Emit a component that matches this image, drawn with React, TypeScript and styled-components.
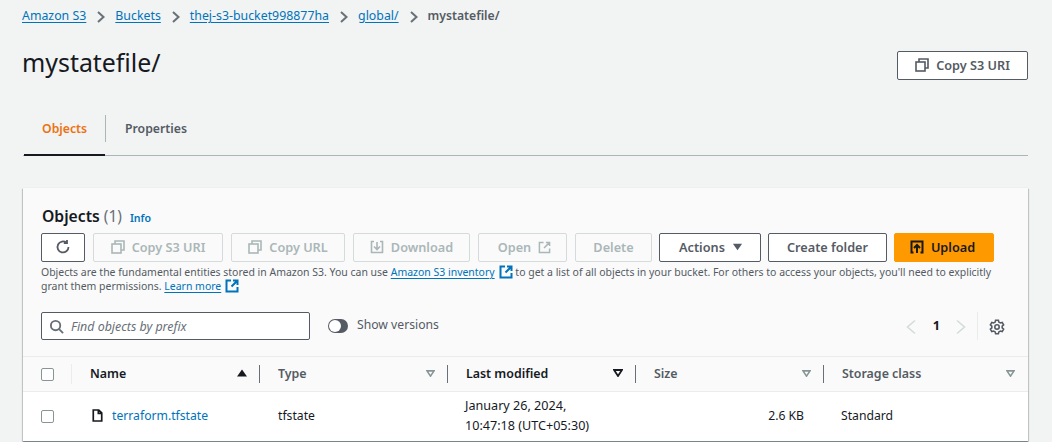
import React from "react";
import styled, { createGlobalStyle } from "styled-components";

const Global = createGlobalStyle`
  html, body { margin: 0; padding: 0; background: #f2f3f3; height: 442px; overflow: hidden; }
  body { font-family: "Noto Sans", "Open Sans", "Liberation Sans", sans-serif; color: #16191f; }
  * { box-sizing: border-box; }
`;

const Page = styled.div`
  width: 1052px;
  height: 442px;
  padding: 0 24px 0 23px;
  overflow: hidden;
`;
const Crumbs = styled.nav`
  display: flex;
  align-items: center;
  height: 31px;
  margin-left: -1px;
  font-size: 12.35px;
`;
const Crumb = styled.a`
  color: #0073bb;
  text-decoration: underline;
  text-underline-offset: 2px;
  text-decoration-thickness: 1px;
`;
const CrumbCurrent = styled.span`
  color: #545b64;
  font-weight: 600;
  font-size: 12.2px;
`;
const CrumbSep = styled.svg`
  width: 10px;
  height: 12px;
  margin: 2px 9px 0 10px;
  fill: none;
  stroke: #687078;
  stroke-width: 2;
`;
const TitleRow = styled.header`
  display: flex;
  align-items: center;
  justify-content: space-between;
  height: 47px;
  margin-top: 11px;
`;
const Title = styled.h1`
  margin: 0 0 7px -1px;
  font-size: 24.9px;
  font-weight: 400;
  color: #16191f;
  line-height: 32px;
`;
const Btn = styled.button<{ $w: number; $off?: boolean; $primary?: boolean; $nudge?: number; $pull?: boolean }>`
  display: inline-flex;
  align-items: center;
  justify-content: center;
  gap: 7px;
  width: ${(p) => p.$w}px;
  height: 29px;
  margin-left: ${(p) => (p.$pull ? -1 : 0)}px;
  padding: 0 ${(p) => (p.$primary ? 3 : 0)}px 1px ${(p) => p.$nudge ?? 0}px;
  border-radius: 2px;
  font-family: inherit;
  font-size: 12.7px;
  font-weight: 600;
  background: ${(p) => (p.$primary ? "#ff9900" : p.$off ? "#fafafa" : "#fff")};
  color: ${(p) => (p.$primary ? "#16191f" : p.$off ? "#aab7b8" : "#545b64")};
  border: 1px solid ${(p) => (p.$primary ? "#ff9900" : p.$off ? "#d5dbdb" : "#545b64")};
`;
const Tabs = styled.div`
  display: flex;
  align-items: stretch;
  height: 51px;
  margin-top: 16px;
  border-bottom: 1px solid #aab7b8;
`;
const Tab = styled.div<{ $active?: boolean }>`
  position: relative;
  display: flex;
  align-items: center;
  padding: 0 19px 3px ${(p) => (p.$active ? 18 : 19)}px;
  width: ${(p) => (p.$active ? "81px" : "auto")};
  margin-left: ${(p) => (p.$active ? "1px" : "0")};
  font-size: 12.25px;
  font-weight: 600;
  color: ${(p) => (p.$active ? "#ec7211" : "#545b64")};
  &::after {
    content: "";
    display: ${(p) => (p.$active ? "block" : "none")};
    position: absolute;
    left: 0;
    right: 0;
    bottom: -1px;
    height: 2px;
    background: #16191f;
  }
`;
const TabDivider = styled.span`
  align-self: center;
  width: 1px;
  height: 27px;
  margin-bottom: 3px;
  background: #aab7b8;
`;
const Card = styled.section`
  height: 253px;
  margin-top: 32px;
  background: #fafafa;
  box-shadow: 0 1px 1px 0 rgba(0, 28, 36, 0.3), 1px 1px 1px 0 rgba(0, 28, 36, 0.15),
    -1px 1px 1px 0 rgba(0, 28, 36, 0.15), 0 0 1px rgba(0, 28, 36, 0.12);
`;
const CardHead = styled.div`
  padding: 18px 18px 0 18px;
`;
const HeadLine = styled.div`
  display: flex;
  align-items: baseline;
  height: 26px;
  line-height: 20px;
`;
const HeadTitle = styled.h2`
  margin: 0 0 0 1px;
  font-size: 15.7px;
  font-weight: 600;
  color: #16191f;
`;
const HeadCount = styled.span`
  margin-left: 4px;
  font-size: 15.5px;
  color: #687078;
`;
const Info = styled.a`
  margin-left: 8px;
  font-size: 10.6px;
  font-weight: 600;
  color: #0073bb;
`;
const Toolbar = styled.div`
  display: flex;
  gap: 8px;
  margin-top: 1px;
`;
const Desc = styled.p`
  margin: 3px 0 0;
  font-size: 10.47px;
  line-height: 14px;
  color: #545b64;
  width: 960px;
`;
const InlineLink = styled.a`
  color: #0073bb;
  text-decoration: underline;
  text-underline-offset: 2px;
`;
const ExtIcon = styled.svg`
  display: inline-block;
  width: 14px;
  height: 14px;
  margin-left: 4px;
  vertical-align: -3px;
  fill: none;
  stroke: #0073bb;
  stroke-width: 2;
`;
const FilterRow = styled.div`
  display: flex;
  align-items: center;
  height: 28px;
  margin: 19px 0 0;
  padding: 0 5px 0 0;
`;
const Search = styled.div`
  display: flex;
  align-items: center;
  gap: 7px;
  width: 269px;
  height: 28px;
  padding-left: 7px;
  background: #fff;
  border: 1px solid #545b64;
  border-radius: 2px;
  font-size: 12.4px;
  font-style: italic;
  color: #687078;
`;
const Toggle = styled.span`
  position: relative;
  display: block;
  width: 20px;
  height: 14px;
  margin-left: 18px;
  border-radius: 7px;
  background: #545b64;
  &::after {
    content: "";
    position: absolute;
    left: 1px;
    top: 1px;
    width: 12px;
    height: 12px;
    border-radius: 50%;
    background: #fff;
  }
`;
const ToggleLabel = styled.span`
  margin: -4px 0 0 9px;
  font-size: 12.2px;
  color: #545b64;
`;
const Pager = styled.div`
  display: flex;
  align-items: center;
  margin-left: auto;
  height: 28px;
  font-size: 12.8px;
  font-weight: 700;
  color: #16191f;
`;
const PagerChevron = styled.svg`
  width: 12px;
  height: 16px;
  margin-top: 2px;
  fill: none;
  stroke: #d5dbdb;
  stroke-width: 1.6;
`;
const PagerNumber = styled.span`
  margin: -2px 15px 0 16px;
`;
const PagerDivider = styled.span`
  width: 1px;
  height: 28px;
  margin: 0 11px 0 10px;
  background: #eaeded;
`;
const Gear = styled.svg`
  width: 16px;
  height: 16px;
  margin-top: 2px;
  fill: none;
  stroke: #545b64;
  stroke-width: 1.6;
`;
const TableGap = styled.div`
  height: 16px;
`;
const Row = styled.div<{ $head?: boolean }>`
  display: grid;
  grid-template-columns: 48px 188px 188px 188px 188px 205px;
  align-items: center;
  height: ${(p) => (p.$head ? "35px" : "50px")};
  background: ${(p) => (p.$head ? "#fafafa" : "#fff")};
  border-top: 1px solid #eaeded;
`;
const CheckCell = styled.div<{ $sep?: boolean }>`
  position: relative;
  height: 100%;
  display: flex;
  align-items: center;
  padding-left: 18px;
  &::after {
    content: "";
    display: ${(p) => (p.$sep ? "block" : "none")};
    position: absolute;
    right: -1px;
    top: 7px;
    bottom: 7px;
    width: 1px;
    background: #eaeded;
  }
`;
const Check = styled.span`
  display: block;
  width: 13px;
  height: 13px;
  background: #fff;
  border: 1px solid #879596;
  border-radius: 2px;
`;
const HeadCell = styled.div<{ $sep?: boolean; $strong?: boolean }>`
  position: relative;
  display: flex;
  align-items: center;
  justify-content: space-between;
  height: 100%;
  padding: 0 ${(p) => (p.$sep ? 12 : 13)}px 2px 19px;
  font-size: 12.4px;
  font-weight: 600;
  color: ${(p) => (p.$strong ? "#16191f" : "#545b64")};
  &::after {
    content: "";
    display: ${(p) => (p.$sep ? "block" : "none")};
    position: absolute;
    right: -1px;
    top: 8px;
    bottom: 8px;
    width: 1px;
    background: #687078;
  }
`;
const SortIcon = styled.svg<{ $small?: boolean }>`
  width: ${(p) => (p.$small ? 9 : 10)}px;
  height: ${(p) => (p.$small ? 7 : 8)}px;
  flex: none;
`;
const Cell = styled.div<{ $right?: boolean; $inset?: number; $size?: number }>`
  display: flex;
  align-items: center;
  justify-content: ${(p) => (p.$right ? "flex-end" : "flex-start")};
  padding: 0 ${(p) => (p.$right ? 19 : 0)}px 2px ${(p) => (p.$right ? 0 : p.$inset ?? 19)}px;
  font-size: ${(p) => p.$size ?? 12.2}px;
  line-height: 20px;
  color: #16191f;
`;
const FileLink = styled.a`
  margin-left: 9px;
  color: #0073bb;
`;
const FileIcon = styled.svg`
  width: 11px;
  height: 13px;
  margin-left: 2px;
  fill: none;
  stroke: #16191f;
  stroke-width: 2;
`;
const BtnIcon = styled.svg<{ $size?: number; $stroke?: number }>`
  width: ${(p) => p.$size ?? 14}px;
  height: ${(p) => p.$size ?? 14}px;
  flex: none;
  fill: none;
  stroke: currentColor;
  stroke-width: ${(p) => p.$stroke ?? 1.6};
`;
const Caret = styled.svg`
  width: 11px;
  height: 8px;
`;

const Sep = () => (
  <CrumbSep viewBox="0 0 10 12"><path d="M2 1l5.500 5L2 11" /></CrumbSep>
);
const CopyIcon = () => (
  <BtnIcon viewBox="0 0 14 14">
    <rect x="1" y="4" width="9" height="9" />
    <path d="M4 4V1h9v9h-3" />
  </BtnIcon>
);
const DownloadIcon = () => (
  <BtnIcon viewBox="0 0 14 14">
    <path d="M4 1.500H1.500v11h11v-11H10M7 2v7M4 6.500L7 9.500l3-3" />
  </BtnIcon>
);
const Sort = ({ dir, color, small }: { dir: "up" | "down"; color: string; small?: boolean }) => (
  <SortIcon viewBox="0 0 10 8" $small={small}>
    {dir === "up" ? (
      <path d="M5 0.500L10 7.500H0z" fill={color} />
    ) : (
      <path d="M1 1h8L5 7z" fill="none" stroke={color} strokeWidth="1.800" />
    )}
  </SortIcon>
);
const LinkOut = () => (
  <ExtIcon viewBox="0 0 14 14"><path d="M6 1.500H1.500v11h11V8M8 1.500h4.500V6M12.500 1.500L6.500 7.500" /></ExtIcon>
);

export default function App() {
  return (
    <Page>
      <Global />
      <Crumbs>
        <Crumb>Amazon S3</Crumb><Sep />
        <Crumb>Buckets</Crumb><Sep />
        <Crumb>thej-s3-bucket998877ha</Crumb><Sep />
        <Crumb>global/</Crumb><Sep />
        <CrumbCurrent>mystatefile/</CrumbCurrent>
      </Crumbs>
      <TitleRow>
        <Title>mystatefile/</Title>
        <Btn $w={131}><CopyIcon />Copy S3 URI</Btn>
      </TitleRow>
      <Tabs>
        <Tab $active>Objects</Tab>
        <TabDivider />
        <Tab>Properties</Tab>
      </Tabs>
      <Card>
        <CardHead>
          <HeadLine>
            <HeadTitle>Objects</HeadTitle>
            <HeadCount>(1)</HeadCount>
            <Info>Info</Info>
          </HeadLine>
          <Toolbar>
            <Btn $w={44} aria-label="Refresh">
              <BtnIcon viewBox="0 0 16 16" $size={16} $stroke={1.8}>
                <path d="M13.500 8a5.500 5.500 0 1 1-2-4.300M12 1v3.200H8.800" />
              </BtnIcon>
            </Btn>
            <Btn $w={130} $off><CopyIcon />Copy S3 URI</Btn>
            <Btn $w={114} $off><CopyIcon />Copy URL</Btn>
            <Btn $w={117} $off><DownloadIcon />Download</Btn>
            <Btn $w={89} $off $nudge={4}>Open
              <BtnIcon viewBox="0 0 14 14" $size={13}>
                <path d="M6 1.500H1.500v11h11V8M8.500 1.500h4v4M12.500 1.500L6.500 7.500" />
              </BtnIcon>
            </Btn>
            <Btn $w={77} $off>Delete</Btn>
            <Btn $w={102} $pull $nudge={2}>
              Actions
              <Caret viewBox="0 0 12 8"><path d="M1 0.500h10L6 7.500z" fill="#545b64" /></Caret>
            </Btn>
            <Btn $w={119} $pull>Create folder</Btn>
            <Btn $w={100} $primary $pull>
              <BtnIcon viewBox="0 0 14 14" $stroke={2}>
                <path d="M3.500 12.500H1.500v-11h11v11h-2M7 13V5.500M4 8l3-3 3 3" />
              </BtnIcon>
              Upload
            </Btn>
          </Toolbar>
          <Desc>
            Objects are the fundamental entities stored in Amazon S3. You can use{" "}
            <InlineLink>Amazon S3 inventory</InlineLink>
            <LinkOut />
            {" "}to get a list of all objects in your bucket. For others to access your objects, you'll need to explicitly grant them permissions.{" "}
            <InlineLink>Learn more</InlineLink>
            <LinkOut />
          </Desc>
          <FilterRow>
            <Search>
              <svg width="15" height="15" viewBox="0 0 16 16" fill="none" stroke="#687078" strokeWidth="2">
                <circle cx="7" cy="7" r="5" /><path d="M10.500 10.500L15 15" />
              </svg>
              Find objects by prefix
            </Search>
            <Toggle />
            <ToggleLabel>Show versions</ToggleLabel>
            <Pager>
              <PagerChevron viewBox="0 0 12 16"><path d="M10 1.500L2.500 8l7.500 6.500" /></PagerChevron>
              <PagerNumber>1</PagerNumber>
              <PagerChevron viewBox="0 0 12 16"><path d="M2 1.500L9.500 8 2 14.500" /></PagerChevron>
              <PagerDivider />
              <Gear viewBox="0 0 16 16">
                <circle cx="8" cy="8" r="2.200" />
                <path d="M6.600 1.200h2.800l.4 1.900 1.600.9 1.800-.6 1.400 2.400-1.400 1.300v1.800l1.400 1.300-1.400 2.400-1.800-.6-1.600.9-.4 1.900H6.600l-.4-1.900-1.600-.9-1.800.6L1.400 10.200l1.400-1.300V7.100L1.400 5.800l1.400-2.400 1.800.6 1.600-.9z" />
              </Gear>
            </Pager>
          </FilterRow>
        </CardHead>
        <TableGap />
        <Row $head>
          <CheckCell $sep><Check /></CheckCell>
          <HeadCell $sep $strong>Name<Sort dir="up" color="#16191f" /></HeadCell>
          <HeadCell $sep>Type<Sort dir="down" color="#879596" small /></HeadCell>
          <HeadCell $sep $strong>Last modified<Sort dir="down" color="#16191f" /></HeadCell>
          <HeadCell $sep>Size<Sort dir="down" color="#879596" small /></HeadCell>
          <HeadCell>Storage class<Sort dir="down" color="#879596" small /></HeadCell>
        </Row>
        <Row>
          <CheckCell><Check /></CheckCell>
          <Cell>
            <FileIcon viewBox="0 0 13 15"><path d="M1.500 1h6.500l3.500 3.500V14h-10zM7.500 1v4h4" /></FileIcon>
            <FileLink>terraform.tfstate</FileLink>
          </Cell>
          <Cell>tfstate</Cell>
          <Cell $inset={18} $size={12.6}>January 26, 2024,<br />10:47:18 (UTC+05:30)</Cell>
          <Cell $right>2.6 KB</Cell>
          <Cell $inset={18}>Standard</Cell>
        </Row>
      </Card>
    </Page>
  );
}
